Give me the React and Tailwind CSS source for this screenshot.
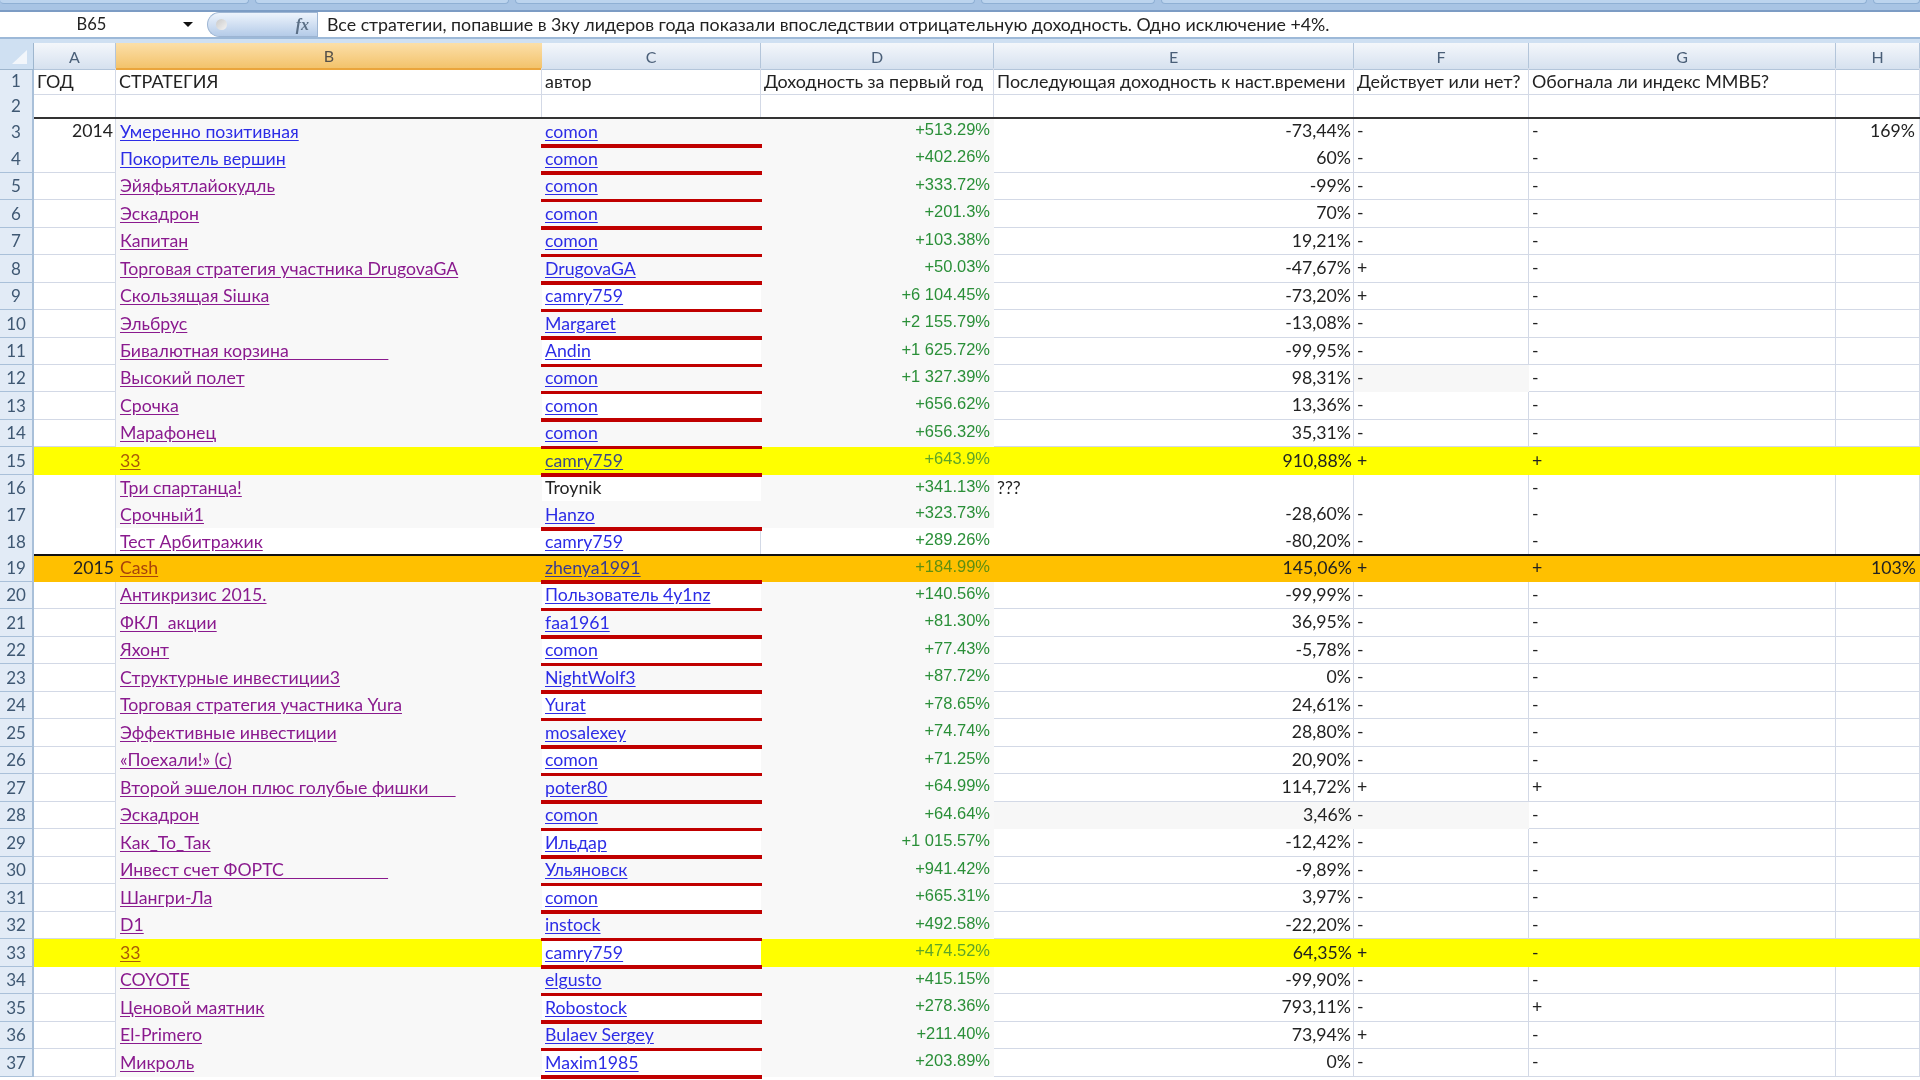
import React from 'react'

const font = 'font-["Lato","Carlito","Open_Sans",sans-serif]'
const gridCols = 'grid grid-cols-[34px_82px_426px_219px_233px_360px_175px_307px_84px]'
const line = 'border-b border-r border-[#d3d9e6]'

// year, strategy, author, first year, later, active, beat index, H
const rows = [
  [3, '2014', 'Умеренно позитивная', 'comon', '+513.29%', '-73,44%', '-', '-', '169%'],
  [4, '', 'Покоритель вершин', 'comon', '+402.26%', '60%', '-', '-'],
  [5, '', 'Эйяфьятлайокудль', 'comon', '+333.72%', '-99%', '-', '-'],
  [6, '', 'Эскадрон', 'comon', '+201.3%', '70%', '-', '-'],
  [7, '', 'Капитан', 'comon', '+103.38%', '19,21%', '-', '-'],
  [8, '', 'Торговая стратегия участника DrugovaGA', 'DrugovaGA', '+50.03%', '-47,67%', '+', '-'],
  [9, '', 'Скользящая Siшка', 'camry759', '+6 104.45%', '-73,20%', '+', '-'],
  [10, '', 'Эльбрус', 'Margaret', '+2 155.79%', '-13,08%', '-', '-'],
  [11, '', 'Бивалютная корзина' + '\u00a0'.repeat(22), 'Andin', '+1 625.72%', '-99,95%', '-', '-'],
  [12, '', 'Высокий полет', 'comon', '+1 327.39%', '98,31%', '-', '-'],
  [13, '', 'Срочка', 'comon', '+656.62%', '13,36%', '-', '-'],
  [14, '', 'Марафонец', 'comon', '+656.32%', '35,31%', '-', '-'],
  [15, '', '33', 'camry759', '+643.9%', '910,88%', '+', '+'],
  [16, '', 'Три спартанца!', 'Troynik', '+341.13%', '', '', '-'],
  [17, '', 'Срочный1', 'Hanzo', '+323.73%', '-28,60%', '-', '-'],
  [18, '', 'Тест Арбитражик', 'camry759', '+289.26%', '-80,20%', '-', '-'],
  [19, '2015', 'Cash', 'zhenya1991', '+184.99%', '145,06%', '+', '+', '103%'],
  [20, '', 'Антикризис 2015.', 'Пользователь 4y1nz', '+140.56%', '-99,99%', '-', '-'],
  [21, '', 'ФКЛ\u00a0 акции', 'faa1961', '+81.30%', '36,95%', '-', '-'],
  [22, '', 'Яхонт', 'comon', '+77.43%', '-5,78%', '-', '-'],
  [23, '', 'Структурные инвестиции3', 'NightWolf3', '+87.72%', '0%', '-', '-'],
  [24, '', 'Торговая стратегия участника Yura', 'Yurat', '+78.65%', '24,61%', '-', '-'],
  [25, '', 'Эффективные инвестиции', 'mosalexey', '+74.74%', '28,80%', '-', '-'],
  [26, '', '«Поехали!» (с)', 'comon', '+71.25%', '20,90%', '-', '-'],
  [27, '', 'Второй эшелон плюс голубые фишки' + '\u00a0'.repeat(6), 'poter80', '+64.99%', '114,72%', '+', '+'],
  [28, '', 'Эскадрон', 'comon', '+64.64%', '3,46%', '-', '-'],
  [29, '', 'Как_То_Так', 'Ильдар', '+1 015.57%', '-12,42%', '-', '-'],
  [30, '', 'Инвест счет ФОРТС' + '\u00a0'.repeat(23), 'Ульяновск', '+941.42%', '-9,89%', '-', '-'],
  [31, '', 'Шангри-Ла', 'comon', '+665.31%', '3,97%', '-', '-'],
  [32, '', 'D1', 'instock', '+492.58%', '-22,20%', '-', '-'],
  [33, '', '33', 'camry759', '+474.52%', '64,35%', '+', '-'],
  [34, '', 'COYOTE', 'elgusto', '+415.15%', '-99,90%', '-', '-'],
  [35, '', 'Ценовой маятник', 'Robostock', '+278.36%', '793,11%', '-', '+'],
  [36, '', 'El-Primero', 'Bulaev Sergey', '+211.40%', '73,94%', '+', '-'],
  [37, '', 'Микроль', 'Maxim1985', '+203.89%', '0%', '-', '-'],
]

const whiteAuthors = [9, 11, 13, 16, 18, 20, 22, 24, 26, 29, 31, 33, 35, 37]
const columns = ['A', 'B', 'C', 'D', 'E', 'F', 'G', 'H']

function Tabs() {
  return (
    <div className="flex h-[12px] gap-[6px] bg-[#a8c4e4] border-b-2 border-[#7c9cc4] overflow-hidden">
      <div className="w-[249px] h-[4px] bg-[#bcd4ee] border-b border-r border-[#8fb0d4] rounded-b" />
      <div className="w-[254px] h-[4px] bg-[#bcd4ee] border border-t-0 border-[#8fb0d4] rounded-b" />
      <div className="w-[460px] h-[4px] bg-[#bcd4ee] border border-t-0 border-[#8fb0d4] rounded-b" />
      <div className="w-[174px] h-[4px] bg-[#bcd4ee] border border-t-0 border-[#8fb0d4] rounded-b" />
      <div className="w-[706px] h-[4px] bg-[#bcd4ee] border border-t-0 border-[#8fb0d4] rounded-b" />
      <div className="flex-1 h-[4px] bg-[#bcd4ee] border border-t-0 border-[#8fb0d4] rounded-b" />
    </div>
  )
}

function FormulaBar() {
  return (
    <div className="flex h-[27px] bg-white border-b-2 border-[#9db9d8]">
      <div className="w-[207px] flex items-center relative">
        <span className="w-[183px] text-center text-[16.5px] text-[#222]">B65</span>
        <span className="w-0 h-0 border-x-[5px] border-x-transparent border-t-[5px] border-t-[#111]" />
      </div>
      <div className="w-[110px] rounded-l-full bg-gradient-to-b from-[#eef4fc] to-[#b4cbe8] border border-r-0 border-[#9db5d3] flex items-center justify-between pl-[8px] pr-[8px]">
        <span className="w-[11px] h-[11px] rounded-full bg-gradient-to-br from-[#c9c9c9] to-[#f4f4f4]" />
        <span className="font-['Liberation_Serif',serif] italic font-bold text-[16px] text-[#5b6f86]">fx</span>
      </div>
      <div className="flex-1 border-l border-[#9db5d3] flex items-center pl-[9px] text-[17.8px] text-[#222] whitespace-pre">
        Все стратегии, попавшие в 3ку лидеров года показали впоследствии отрицательную доходность. Одно исключение +4%.
      </div>
    </div>
  )
}

function ColumnHeaders() {
  return (
    <div className={gridCols + ' h-[25px] text-[16px] text-[#4a5f78]'}>
      <div className="bg-[#cfe0f2] border-r border-b border-[#9eb6ce] relative overflow-hidden">
        <svg width="33" height="25" className="absolute inset-0">
          <path d="M27 7 V21 H12 Z" fill="#f2f6fb" />
        </svg>
      </div>
      {columns.map(c => (
        <div
          key={c}
          className={
            c === 'B'
              ? 'flex items-center justify-center pt-[1px] bg-gradient-to-b from-[#fbdfa8] to-[#f3c36b] border-b-2 border-[#eaa53c] text-[#54504a]'
              : 'flex items-center justify-center pt-[1px] bg-gradient-to-b from-[#f4f7fb] to-[#d6e1ef] border-r border-b border-[#b3c5da]'
          }
        >
          {c}
        </div>
      ))}
    </div>
  )
}

function RowNum({ n }) {
  return (
    <div className="flex items-center justify-center bg-[#e2ebf6] border-r-2 border-b border-[#a9c0d9] text-[17px] text-[#3f5873]">
      {n}
    </div>
  )
}

function HeaderRows() {
  const labels = ['ГОД', 'СТРАТЕГИЯ', 'автор', 'Доходность за первый год', 'Последующая доходность к наст.времени', 'Действует или нет?', 'Обогнала ли индекс ММВБ?', '']
  return (
    <>
      <div className={gridCols + ' h-[25px] text-[17.9px] text-[#222]'}>
        <RowNum n={1} />
        {labels.map((l, i) => (
          <div key={i} className={line + ' flex items-center pl-[3px] pt-[2px] leading-none whitespace-pre overflow-hidden'}>{l}</div>
        ))}
      </div>
      <div className={gridCols + ' h-[25px]'}>
        <RowNum n={2} />
        {labels.map((l, i) => (
          <div key={i} className="border-r border-[#d3d9e6]" />
        ))}
      </div>
    </>
  )
}

function rowHeight(n) {
  if (n < 16) return 'h-[27.45px]'
  if (n < 19) return 'h-[26.7px]'
  if (n === 19) return 'h-[26.9px]'
  return 'h-[27.5px]'
}

function Row({ r }) {
  const [n, year, name, author, first, later, active, beat, h] = r
  const yellow = n === 15 || n === 33
  const orange = n === 19
  const fill = yellow ? 'bg-[#ffff00]' : orange ? 'bg-[#ffc000]' : ''
  const plain = fill ? fill + ' ' : 'bg-white ' + line + ' '
  const grey = n === 18 ? 'bg-white' : fill || 'bg-[#f8f8f8]'

  const nameColor = yellow ? 'text-[#a85a08]' : orange ? 'text-[#a8420a]' : n < 5 ? 'text-[#2c2ce6]' : 'text-[#8a1a8e]'
  const authorColor = n === 15 ? 'text-[#3c4a86]' : orange ? 'text-[#3a3a90]' : 'text-[#2c2ce6]'
  const greenColor = yellow ? 'text-[#5fa528]' : orange ? 'text-[#5f8f10]' : 'text-[#2a8f38]'

  let authorBg = fill || 'bg-[#f8f8f8]'
  if (n === 33 || (whiteAuthors.includes(n) && !fill)) authorBg = 'bg-white'

  let laterBg = plain
  let activeBg = plain
  if (n === 28) { laterBg = 'bg-[#f7f7f7] '; activeBg = 'bg-[#f7f7f7] ' }
  if (n === 12) activeBg = 'bg-[#f7f7f7] '

  return (
    <div className={gridCols + ' relative text-[17.7px] text-[#222] ' + rowHeight(n)}>
      <RowNum n={n} />
      <div className={plain + 'flex items-center justify-end pr-[2px]'}>{year}</div>
      <div className={grey + ' flex items-center pl-[4px] whitespace-pre'}>
        <span className={nameColor + ' underline underline-offset-2'}>{name}</span>
      </div>
      <div className={authorBg + ' relative flex items-center pl-[3px] ' + (n === 18 ? 'border-r border-[#d3d9e6]' : '')}>
        <span className={n === 16 ? 'text-[#222]' : authorColor + ' underline underline-offset-2'}>{author}</span>
        {n !== 16 && n !== 18 && (
          <span className="absolute -left-px -right-px -bottom-[2px] h-[3.5px] bg-[#c00000] z-10" />
        )}
      </div>
      <div className={grey + " flex items-start justify-end pr-[4px] leading-[22px] font-['Liberation_Sans',sans-serif] text-[16.5px] " + greenColor}>
        {first}
      </div>
      {n === 16 ? (
        <div className={plain + 'flex items-center pl-[3px]'}>???</div>
      ) : (
        <div className={laterBg + 'flex items-center justify-end pr-[2px]'}>{later}</div>
      )}
      <div className={activeBg + 'flex items-center pl-[3px]'}>{active}</div>
      <div className={plain + 'flex items-center pl-[3px]'}>{beat}</div>
      <div className={plain + 'flex items-center justify-end pr-[4px]'}>{h}</div>
      {n === 3 && <span className="absolute left-[34px] right-0 -top-[1px] h-[2px] bg-[#333] z-10" />}
      {n === 19 && <span className="absolute left-[34px] right-0 -top-[1px] h-[2px] bg-[#111] z-10" />}
    </div>
  )
}

export default function App() {
  return (
    <div className={'h-[1080px] w-[1920px] overflow-hidden bg-white blur-[0.4px] ' + font}>
      <Tabs />
      <FormulaBar />
      <div className="h-[4px] bg-[#cfe0f2]" />
      <ColumnHeaders />
      <HeaderRows />
      {rows.map(r => <Row key={r[0]} r={r} />)}
    </div>
  )
}
